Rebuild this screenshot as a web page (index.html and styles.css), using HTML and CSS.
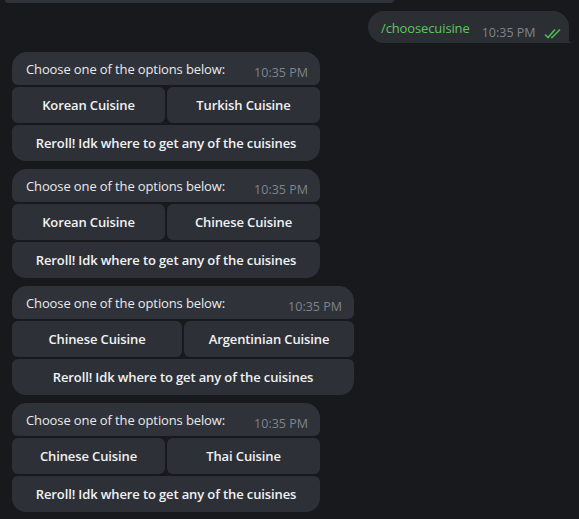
FILE: index.html
```html
<!DOCTYPE html>
<html>
<head>
<meta charset="utf-8">
<link rel="stylesheet" href="styles.css">
</head>
<body>
<div class="chat">
  <div class="prev-bubble"></div>
  <div class="out-row">
    <div class="out-bubble">
      <span class="cmd">/choosecuisine</span>
      <span class="meta">10:35 PM
        <svg class="checks" width="19" height="11" viewBox="0 0 19 11"><path d="M1 6.5 L4 9.5 L11 1.5" fill="none" stroke="#4fbb4f" stroke-width="1.6"/><path d="M7 9.5 L8 9.5 L16 1.5" fill="none" stroke="#4fbb4f" stroke-width="1.6"/></svg>
      </span>
      <svg class="tail" width="8" height="10" viewBox="0 0 8 10"><path d="M0 0 Q1 8 8 10 L0 10 Z" fill="#2b2e33"/></svg>
    </div>
  </div>

  <div class="msg w1">
    <div class="bubble"><span class="text">Choose one of the options below:</span><span class="time">10:35 PM</span></div>
    <div class="kb-row"><div class="btn">Korean Cuisine</div><div class="btn">Turkish Cuisine</div></div>
    <div class="kb-row"><div class="btn last">Reroll! Idk where to get any of the cuisines</div></div>
  </div>

  <div class="msg w1">
    <div class="bubble"><span class="text">Choose one of the options below:</span><span class="time">10:35 PM</span></div>
    <div class="kb-row"><div class="btn">Korean Cuisine</div><div class="btn">Chinese Cuisine</div></div>
    <div class="kb-row"><div class="btn last">Reroll! Idk where to get any of the cuisines</div></div>
  </div>

  <div class="msg w2">
    <div class="bubble"><span class="text">Choose one of the options below:</span><span class="time">10:35 PM</span></div>
    <div class="kb-row"><div class="btn">Chinese Cuisine</div><div class="btn">Argentinian Cuisine</div></div>
    <div class="kb-row"><div class="btn last">Reroll! Idk where to get any of the cuisines</div></div>
  </div>

  <div class="msg w1">
    <div class="bubble"><span class="text">Choose one of the options below:</span><span class="time">10:35 PM</span></div>
    <div class="kb-row"><div class="btn">Chinese Cuisine</div><div class="btn">Thai Cuisine</div></div>
    <div class="kb-row"><div class="btn last">Reroll! Idk where to get any of the cuisines</div></div>
  </div>
</div>
</body>
</html>
```
FILE: styles.css
```css
html, body {
  margin: 0;
  padding: 0;
  background: #17191d;
  width: 579px;
  height: 519px;
  overflow: hidden;
}
body {
  font-family: "Open Sans", "DejaVu Sans", sans-serif;
  font-size: 13px;
  color: #e9eaec;
  letter-spacing: -0.12px;
}
.chat {
  display: flex;
  flex-direction: column;
}
.prev-bubble {
  margin-left: 5px;
  width: 389px;
  height: 3px;
  background: #2f3238;
  border-radius: 0 0 12px 12px;
}
.out-row {
  display: flex;
  justify-content: flex-end;
  padding-right: 10px;
  margin-top: 8px;
}
.out-bubble {
  position: relative;
  width: 201px;
  height: 32px;
  box-sizing: border-box;
  background: #2b2e33;
  border-radius: 16px 16px 4px 16px;
  display: flex;
  align-items: flex-start;
  padding: 8px 0 0 13px;
}
.cmd {
  color: #5dc95d;
  line-height: 18px;
}
.meta {
  margin-left: 12px;
  margin-top: 7px;
  font-size: 12.5px;
  letter-spacing: 0;
  line-height: 14px;
  color: #7e858d;
  display: flex;
  align-items: center;
  gap: 8px;
}
.checks {
  margin-top: 1px;
}
.tail {
  position: absolute;
  right: -4px;
  bottom: 0;
}
.msg {
  margin-left: 12px;
  margin-top: 8px;
  display: flex;
  flex-direction: column;
  gap: 2px;
}
.out-row + .msg {
  margin-top: 9px;
}
.w1 { width: 308px; }
.w2 { width: 342px; }
.bubble {
  height: 33px;
  box-sizing: border-box;
  background: #2f3238;
  border-radius: 15px 15px 6px 6px;
  display: flex;
  align-items: flex-start;
  justify-content: space-between;
  padding: 8px 12px 0 14px;
}
.text {
  line-height: 18px;
}
.time {
  font-size: 12.5px;
  letter-spacing: 0;
  line-height: 14px;
  margin-top: 6px;
  color: #7e858d;
}
.kb-row {
  display: flex;
  gap: 2px;
}
.btn {
  flex: 1;
  height: 36px;
  background: #2d3137;
  border-radius: 6px;
  display: flex;
  align-items: center;
  justify-content: center;
  font-weight: 600;
  color: #f1f2f3;
}
.btn.last {
  border-radius: 6px 6px 14px 14px;
}
```
